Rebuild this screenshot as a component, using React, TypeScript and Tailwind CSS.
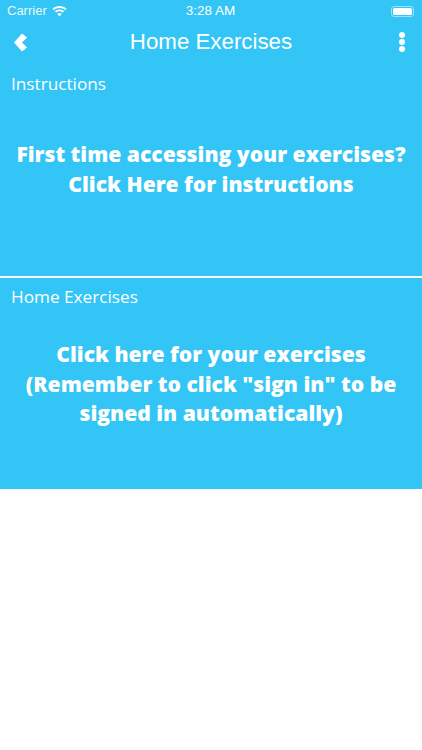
import React from 'react';

function StatusBar() {
  return (
    <div className="h-[22px] grid grid-cols-[1fr_auto_1fr] items-center pl-[7px] pr-[8px] text-white font-['Liberation_Sans',sans-serif]">
      <div className="flex items-center gap-[5px]">
        <span className="text-[13px] opacity-90">Carrier</span>
        <svg width="15" height="11" viewBox="0 0 15 11" fill="white">
          <path d="M7.500 1.900c2.200 0 4.200.9 5.700 2.300l1.300-1.400C12.700 1 10.200 0 7.500 0S2.300 1 .5 2.800l1.300 1.400c1.500-1.400 3.500-2.300 5.700-2.300z" />
          <path d="M7.500 5.200c1.300 0 2.500.5 3.400 1.300l1.200-1.300c-1.200-1.100-2.900-1.800-4.600-1.800s-3.400.7-4.600 1.800l1.200 1.300c.9-.8 2.100-1.300 3.400-1.300z" />
          <path d="M7.500 6.900c-.9 0-1.700.3-2.300.9l2.300 2.700 2.300-2.700c-.6-.6-1.400-.9-2.300-.9z" />
        </svg>
      </div>
      <span className="text-[13.500px] font-medium">3:28 AM</span>
      <div className="flex justify-end items-center">
        <div className="w-[23px] h-[11px] rounded-[3px] border border-white/50 p-[1px]">
          <div className="w-full h-full bg-white rounded-[1.500px]" />
        </div>
      </div>
    </div>
  );
}

function NavBar() {
  return (
    <div className="h-[40px] grid grid-cols-[1fr_auto_1fr] items-center px-[13px]">
      <svg width="15" height="19" viewBox="0 0 15 19" fill="white">
        <path d="M9 0.500 L14 4.500 L9 9.500 L14 14.500 L9 18.500 L1 9.500 Z" />
      </svg>
      <h1 className="text-[22.300px] text-white font-['Liberation_Sans',sans-serif]">Home Exercises</h1>
      <div className="flex flex-col gap-[1px] justify-self-end mr-[4px]">
        <span className="w-[6px] h-[6px] rounded-full bg-white" />
        <span className="w-[6px] h-[6px] rounded-full bg-white" />
        <span className="w-[6px] h-[6px] rounded-full bg-white" />
      </div>
    </div>
  );
}

function Panel({ label, lines, className }: { label: string; lines: string[]; className: string }) {
  return (
    <section className={`bg-[#33c5f6] text-white font-['Open_Sans',sans-serif] ${className}`}>
      <p className="px-[11px] text-[17.200px] leading-[24px]">{label}</p>
      <div className="text-center font-extrabold text-[21.100px] leading-[29.500px]">
        {lines.map((line) => (
          <p key={line} className="whitespace-nowrap">{line}</p>
        ))}
      </div>
    </section>
  );
}

export default function App() {
  return (
    <div className="w-[422px] h-[750px] bg-white overflow-hidden">
      <div className="bg-[#33c5f6]">
        <StatusBar />
        <NavBar />
      </div>
      <Panel
        className="h-[214px] pt-[10px] [&>div]:mt-[43px]"
        label="Instructions"
        lines={['First time accessing your exercises?', 'Click Here for instructions']}
      />
      <div className="h-[2px] bg-white" />
      <Panel
        className="h-[211px] pt-[7px] [&>div]:mt-[30px]"
        label="Home Exercises"
        lines={['Click here for your exercises', '(Remember to click "sign in" to be', 'signed in automatically)']}
      />
    </div>
  );
}
